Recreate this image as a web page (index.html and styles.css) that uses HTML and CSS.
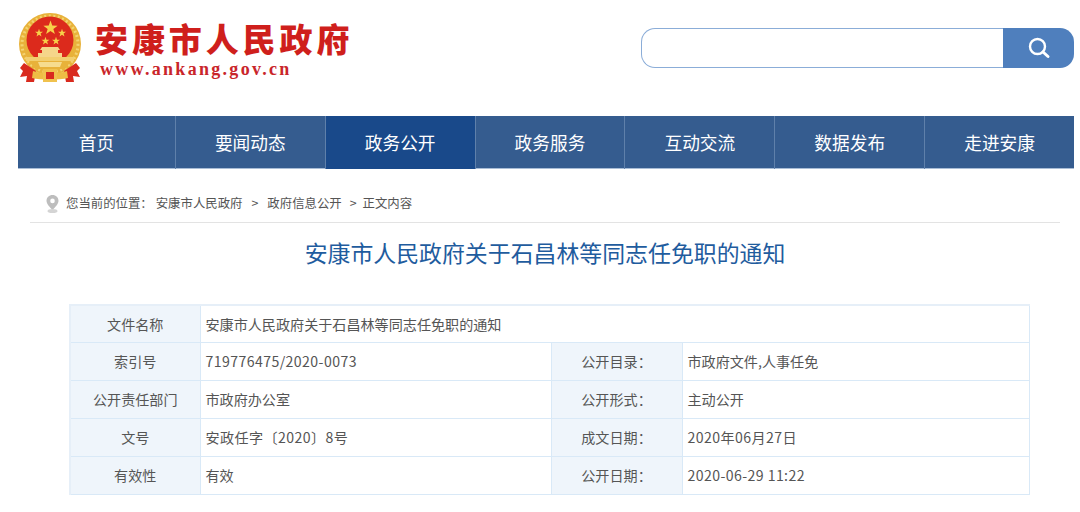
FILE: index.html
```html
<!DOCTYPE html>
<html lang="zh-CN">
<head>
    <meta charset="UTF-8">
    <title>安康市人民政府关于石昌林等同志任免职的通知</title>
    <link rel="stylesheet" href="styles.css">
</head>
<body>
    <div class="header">
        <div class="logo">
            <svg class="emblem" width="64" height="70" viewBox="0 0 64 70">
                <defs>
                    <polygon id="star" points="0,-10 2.35,-3.24 9.51,-3.09 3.8,1.24 5.88,8.09 0,4 -5.88,8.09 -3.8,1.24 -9.51,-3.09 -2.35,-3.24"/>
                </defs>
                <!-- wheat ring -->
                <circle cx="32" cy="31" r="31" fill="#e8b23a"/>
                <circle cx="32" cy="31" r="28" fill="none" stroke="#f4d371" stroke-width="3" stroke-dasharray="2 2.5"/>
                <circle cx="32" cy="27" r="23.5" fill="#dc2a1c"/>
                <g fill="#f7d14a">
                    <use href="#star" transform="translate(32.5 15) scale(.75)"/>
                    <use href="#star" transform="translate(21 20) scale(.42)"/>
                    <use href="#star" transform="translate(44 20) scale(.42)"/>
                    <use href="#star" transform="translate(27.5 28) scale(.42)"/>
                    <use href="#star" transform="translate(38 28) scale(.42)"/>
                </g>
                <!-- gate -->
                <path fill="#f5d68a" d="M24 34h16l2 3h-2v3h4v4H20v-4h4v-3h-2z"/>
                <rect x="8" y="44" width="48" height="4" fill="#f2cf70"/>
                <path fill="#e8b23a" d="M11 48h42l-6 8H17z"/>
                <path fill="#f6dc8e" d="M20 49h24l-2 5H22z"/>
                <!-- ribbons -->
                <path fill="#d92a1e" d="M6 50l12 8-2 11H8l1-6-7 1 3-6-3-3zM58 50l-12 8 2 11h8l-1-6 7 1-3-6 3-3z"/>
                <path fill="#eebd45" d="M15 58c9 3 25 3 34 0l1 7c-9 2-27 2-36 0z"/>
                <rect x="25" y="56" width="14" height="13" fill="#f0c24e"/>
                <rect x="28" y="59" width="8" height="7" fill="#d92a1e"/>
            </svg>
            <div class="logo-text">
                <div class="logo-name">安康市人民政府</div>
                <div class="logo-url">www.ankang.gov.cn</div>
            </div>
        </div>
        <div class="search">
            <div class="search-input"></div>
            <div class="search-btn">
                <svg width="24" height="24" viewBox="0 0 24 24" fill="none" stroke="#fff">
                    <circle cx="10.5" cy="10.5" r="7.5" stroke-width="2.4"/>
                    <path d="M16 16l5 4.5" stroke-width="3" stroke-linecap="round"/>
                </svg>
            </div>
        </div>
    </div>

    <div class="nav">
        <a class="nav-item nav-first">首页</a>
        <a class="nav-item">要闻动态</a>
        <a class="nav-item active">政务公开</a>
        <a class="nav-item">政务服务</a>
        <a class="nav-item">互动交流</a>
        <a class="nav-item">数据发布</a>
        <a class="nav-item">走进安康</a>
    </div>

    <div class="crumb">
        <svg class="pin" width="13" height="18" viewBox="0 0 13 18">
            <path fill="#bdbdbd" fill-rule="evenodd" d="M6.5 0C3 0 .5 2.6.5 5.8c0 3 3.6 7 6 9.2 2.4-2.200 6-6.200 6-9.200C12.500 2.600 10 0 6.500 0zm0 3.600a2.300 2.300 0 1 1 0 4.600 2.300 2.300 0 0 1 0-4.600z"/>
            <ellipse cx="6.5" cy="16" rx="5" ry="2" fill="#d4d4d4"/>
        </svg>
        <span class="crumb-label">您当前的位置：</span>
        <span>安康市人民政府</span>
        <span class="crumb-sep">&gt;</span>
        <span>政府信息公开</span>
        <span class="crumb-sep2">&gt;</span>
        <span>正文内容</span>
    </div>

    <h1 class="title">安康市人民政府关于石昌林等同志任免职的通知</h1>

    <table class="info">
        <colgroup>
            <col class="col-first">
            <col class="col-value">
            <col class="col-label">
            <col>
        </colgroup>
        <tr>
            <th>文件名称</th>
            <td colspan="3">安康市人民政府关于石昌林等同志任免职的通知</td>
        </tr>
        <tr>
            <th>索引号</th>
            <td class="num">719776475/2020-0073</td>
            <th>公开目录：</th>
            <td>市政府文件,人事任免</td>
        </tr>
        <tr>
            <th>公开责任部门</th>
            <td>市政府办公室</td>
            <th>公开形式：</th>
            <td>主动公开</td>
        </tr>
        <tr>
            <th>文号</th>
            <td class="num">安政任字〔2020〕8号</td>
            <th>成文日期：</th>
            <td class="num">2020年06月27日</td>
        </tr>
        <tr>
            <th>有效性</th>
            <td>有效</td>
            <th>公开日期：</th>
            <td class="num">2020-06-29 11:22</td>
        </tr>
    </table>
</body>
</html>
```

FILE: styles.css
```css
* {
    margin: 0;
    padding: 0;
    box-sizing: border-box;
}

body {
    font-family: "Noto Sans CJK SC", sans-serif;
    background: #fff;
    color: #555;
    font-size: 14px;
    overflow: hidden;
}

.header {
    height: 116px;
    padding: 13px 6px 0 18px;
    display: flex;
    justify-content: space-between;
    align-items: flex-start;
}

.logo {
    display: flex;
    gap: 13px;
}

.logo-text {
    padding-top: 3px;
}

.logo-name {
    font-weight: 900;
    font-size: 33px;
    line-height: 44px;
    letter-spacing: 3.9px;
    color: #cf1f1c;
}

.logo-url {
    font-family: "Liberation Serif", serif;
    font-weight: bold;
    font-size: 18px;
    line-height: 18px;
    letter-spacing: 2.3px;
    padding-left: 5px;
    color: #c9252a;
}

.search {
    width: 433px;
    height: 40px;
    margin-top: 15px;
    display: flex;
}

.search-input {
    flex: 1;
    background: #fff;
    border: 1px solid #8badd8;
    border-right: none;
    border-radius: 14px 0 0 14px;
}

.search-btn {
    width: 71px;
    background: #4f7fbd;
    border-radius: 0 14px 14px 0;
    display: flex;
    align-items: center;
    justify-content: center;
}

.nav {
    margin: 0 6px 0 18px;
    height: 53px;
    display: flex;
    background: #355c8f;
    border-bottom: 1px solid #a9bdd6;
}

.nav-item {
    width: 150px;
    height: 53px;
    line-height: 53px;
    text-align: center;
    font-size: 17.7px;
    color: #fff;
    border-left: 1px solid #5f80aa;
}

.nav-first {
    width: 157px;
    border-left: none;
}

.nav-item.active {
    background: #19498a;
}

.crumb {
    margin: 0 20px 0 30px;
    padding-left: 16px;
    height: 54px;
    padding-top: 22px;
    border-bottom: 1px solid #e3e3e3;
    font-size: 12.4px;
    line-height: 24px;
    color: #555;
    display: flex;
    align-items: flex-start;
}

.pin {
    margin: 4px 7px 0 0;
}

.crumb-label {
    margin-right: 3px;
}

.crumb-sep {
    margin: 0 9px;
}

.crumb-sep2 {
    margin: 0 6px 0 8px;
}

.title {
    font-weight: normal;
    font-size: 22.9px;
    line-height: 30px;
    color: #1f5c9e;
    text-align: center;
    margin: 14px 0 37px 11px;
    width: 1068px;
}

.info {
    margin-left: 69px;
    width: 961px;
    table-layout: fixed;
    border-collapse: collapse;
    border-top: 2px solid #e6eff8;
    border-left: 2px solid #e6eff8;
}

.col-first {
    width: 130px;
}

.col-value {
    width: 351px;
}

.col-label {
    width: 131px;
}

.info tr {
    height: 38px;
}

.info tr:first-child {
    height: 37px;
}

.info th,
.info td {
    border: 1px solid #d9e9f7;
    font-size: 14.1px;
    font-weight: normal;
    color: #555;
}

.info th {
    background: #eff5fb;
    text-align: center;
}

.info td {
    padding-left: 5px;
}

.info .num {
    letter-spacing: .42px;
}
```
